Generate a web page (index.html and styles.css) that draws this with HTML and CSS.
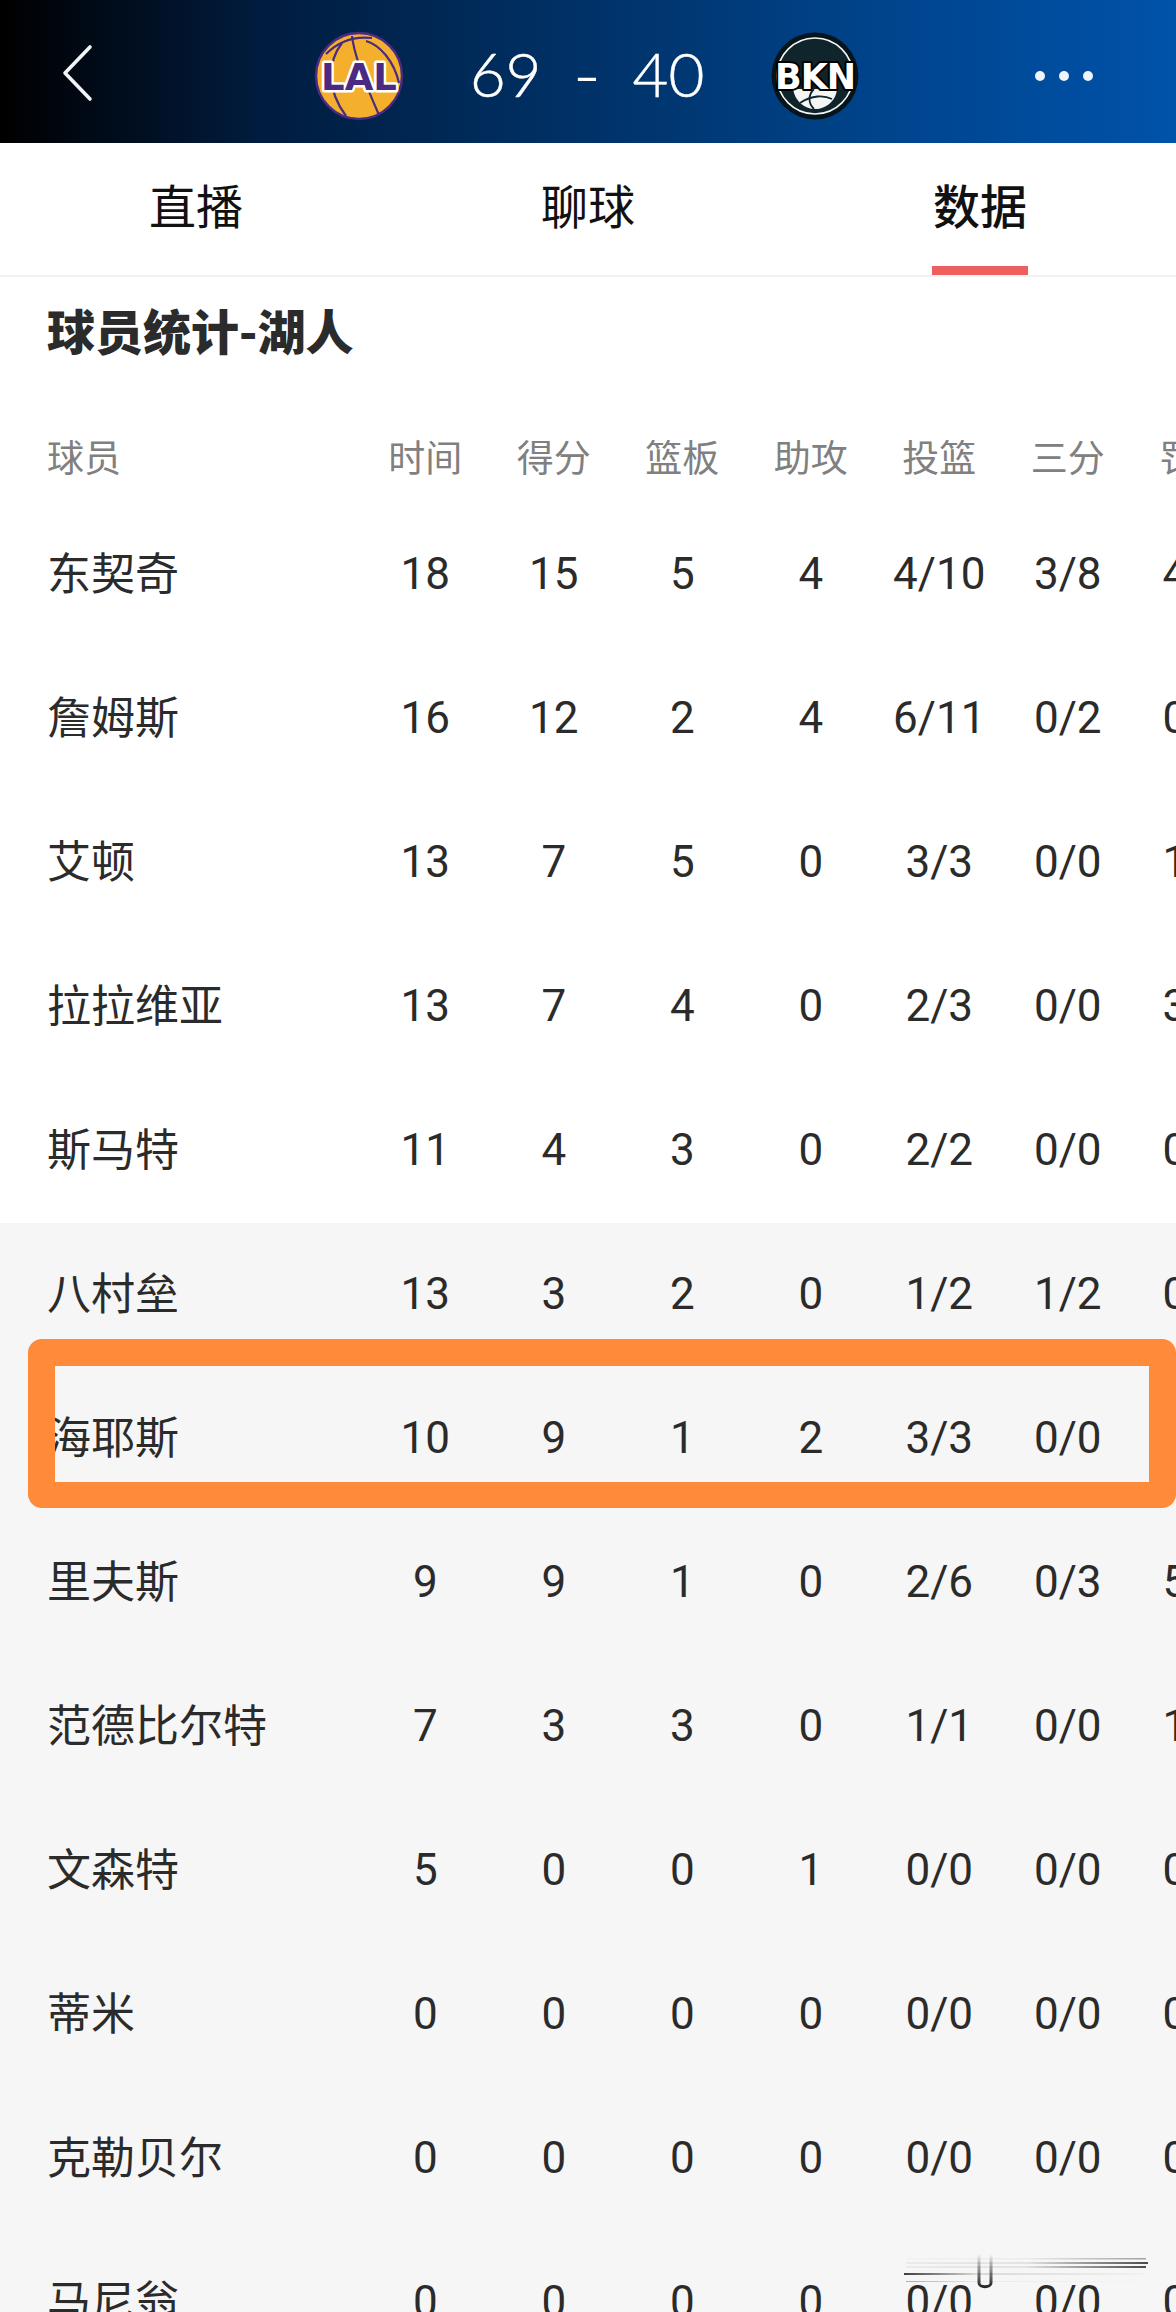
FILE: index.html
```html
<!DOCTYPE html>
<html>

<head>
    <meta charset="utf-8">
    <link rel="stylesheet" href="styles.css">
</head>

<body>
    <div id="page">
        <div id="score-bar">
            <svg class="back" width="34" height="60" viewBox="0 0 34 60">
                <path d="M30 4 L5 30 L30 56" fill="none" stroke="#f2f4f6" stroke-width="3.6" stroke-linecap="round" stroke-linejoin="round"/>
            </svg>
            <div id="score">
                <svg class="logo" width="90" height="90" viewBox="0 0 90 90">
                    <circle cx="45" cy="45" r="43" fill="#f4b02c" stroke="#4a2a82" stroke-width="2.5"/>
                    <g fill="none" stroke="#4a2a82" stroke-width="2.2">
                        <path d="M12 23 C24 11 40 5 58 7"/>
                        <path d="M38 5 C40 24 50 50 65 84"/>
                        <path d="M28 12 C14 30 12 58 32 85"/>
                        <path d="M52 10 C66 14 80 30 85 52"/>
                    </g>
                    <text class="logo-text lal" x="45" y="59" text-anchor="middle">LAL</text>
                </svg>
                <div class="nums"><span>69</span><span class="dash">-</span><span>40</span></div>
                <svg class="logo" width="90" height="90" viewBox="0 0 90 90">
                    <circle cx="45" cy="45" r="43.5" fill="#06141c"/>
                    <circle cx="45" cy="45" r="38" fill="#10242c" stroke="#f4f6f6" stroke-width="1.6"/>
                    <path d="M23 58 L67 58 C66 70 56 78 45 78 C34 78 25 70 23 58 Z" fill="#f4f6f6"/>
                    <g fill="none" stroke="#10242c" stroke-width="1.8">
                        <path d="M44 58 C38 64 38 72 44 78"/>
                        <path d="M30 72 C42 64 54 64 62 68"/>
                    </g>
                    <text class="logo-text bkn" x="45" y="58" text-anchor="middle">BKN</text>
                </svg>
            </div>
            <div class="dots"><i></i><i></i><i></i></div>
        </div>

        <div id="tabs">
            <div class="tab">直播</div>
            <div class="tab">聊球</div>
            <div class="tab active">数据</div>
        </div>

        <div id="title">球员统计-湖人</div>

        <div id="stats">
            <div class="row head">
                <div class="name">球员</div>
                <div class="col">时间</div><div class="col">得分</div><div class="col">篮板</div><div class="col">助攻</div><div class="col">投篮</div><div class="col">三分</div><div class="col">罚球</div>
            </div>

            <div class="row">
                <div class="name">东契奇</div>
                <div class="col">18</div><div class="col">15</div><div class="col">5</div><div class="col">4</div><div class="col">4/10</div><div class="col">3/8</div><div class="col">4/4</div>
            </div>
            <div class="row">
                <div class="name">詹姆斯</div>
                <div class="col">16</div><div class="col">12</div><div class="col">2</div><div class="col">4</div><div class="col">6/11</div><div class="col">0/2</div><div class="col">0/0</div>
            </div>
            <div class="row">
                <div class="name">艾顿</div>
                <div class="col">13</div><div class="col">7</div><div class="col">5</div><div class="col">0</div><div class="col">3/3</div><div class="col">0/0</div><div class="col">1/1</div>
            </div>
            <div class="row">
                <div class="name">拉拉维亚</div>
                <div class="col">13</div><div class="col">7</div><div class="col">4</div><div class="col">0</div><div class="col">2/3</div><div class="col">0/0</div><div class="col">3/4</div>
            </div>
            <div class="row">
                <div class="name">斯马特</div>
                <div class="col">11</div><div class="col">4</div><div class="col">3</div><div class="col">0</div><div class="col">2/2</div><div class="col">0/0</div><div class="col">0/0</div>
            </div>

            <div id="bench">
                <div class="row">
                    <div class="name">八村垒</div>
                    <div class="col">13</div><div class="col">3</div><div class="col">2</div><div class="col">0</div><div class="col">1/2</div><div class="col">1/2</div><div class="col">0/0</div>
                </div>
                <div class="row">
                    <div class="name">海耶斯</div>
                    <div class="col">10</div><div class="col">9</div><div class="col">1</div><div class="col">2</div><div class="col">3/3</div><div class="col">0/0</div><div class="col">3/4</div>
                </div>
                <div class="row">
                    <div class="name">里夫斯</div>
                    <div class="col">9</div><div class="col">9</div><div class="col">1</div><div class="col">0</div><div class="col">2/6</div><div class="col">0/3</div><div class="col">5/6</div>
                </div>
                <div class="row">
                    <div class="name">范德比尔特</div>
                    <div class="col">7</div><div class="col">3</div><div class="col">3</div><div class="col">0</div><div class="col">1/1</div><div class="col">0/0</div><div class="col">1/2</div>
                </div>
                <div class="row">
                    <div class="name">文森特</div>
                    <div class="col">5</div><div class="col">0</div><div class="col">0</div><div class="col">1</div><div class="col">0/0</div><div class="col">0/0</div><div class="col">0/0</div>
                </div>
                <div class="row">
                    <div class="name">蒂米</div>
                    <div class="col">0</div><div class="col">0</div><div class="col">0</div><div class="col">0</div><div class="col">0/0</div><div class="col">0/0</div><div class="col">0/0</div>
                </div>
                <div class="row">
                    <div class="name">克勒贝尔</div>
                    <div class="col">0</div><div class="col">0</div><div class="col">0</div><div class="col">0</div><div class="col">0/0</div><div class="col">0/0</div><div class="col">0/0</div>
                </div>
                <div class="row">
                    <div class="name">马尼翁</div>
                    <div class="col">0</div><div class="col">0</div><div class="col">0</div><div class="col">0</div><div class="col">0/0</div><div class="col">0/0</div><div class="col">0/0</div>
                </div>
            </div>
        </div>

        <div id="highlight"></div>

        <svg id="watermark" width="246" height="36" viewBox="0 0 246 36">
            <defs>
                <linearGradient id="fade-r" x1="0" x2="1" y1="0" y2="0">
                    <stop offset="0" stop-color="#000" stop-opacity="0.05"/>
                    <stop offset="0.5" stop-color="#000" stop-opacity="0.08"/>
                    <stop offset="1" stop-color="#000" stop-opacity="0.7"/>
                </linearGradient>
                <linearGradient id="fade-l" x1="0" x2="1" y1="0" y2="0">
                    <stop offset="0" stop-color="#000" stop-opacity="0.75"/>
                    <stop offset="0.3" stop-color="#000" stop-opacity="0.12"/>
                    <stop offset="1" stop-color="#000" stop-opacity="0.02"/>
                </linearGradient>
                <linearGradient id="fade-u" x1="0" x2="0" y1="0" y2="1">
                    <stop offset="0" stop-color="#000" stop-opacity="0"/>
                    <stop offset="1" stop-color="#000" stop-opacity="0.85"/>
                </linearGradient>
            </defs>
            <rect x="2" y="5" width="240" height="1.5" fill="url(#fade-r)" opacity="0.5"/>
            <rect x="2" y="9" width="242" height="2" fill="url(#fade-r)"/>
            <rect x="2" y="13" width="240" height="2" fill="url(#fade-r)"/>
            <rect x="0" y="20" width="240" height="2" fill="url(#fade-l)"/>
            <rect x="2" y="28" width="240" height="1" fill="url(#fade-l)" opacity="0.4"/>
            <path d="M75 1 V30 C75 35 87 35 87 30 V1" fill="none" stroke="url(#fade-u)" stroke-width="3"/>
        </svg>
    </div>
</body>

</html>
```

FILE: styles.css
```css
html,
body {
    margin: 0;
    padding: 0;
    background: #fff;
}

#page {
    position: relative;
    width: 1176px;
    height: 2312px;
    overflow: hidden;
    font-family: Roboto, "Noto Sans CJK SC", sans-serif;
    color: #2b2b2b;
}

#score-bar {
    height: 143px;
    box-sizing: border-box;
    padding: 2px 83px 0 60px;
    display: flex;
    justify-content: space-between;
    align-items: center;
    background: linear-gradient(90deg, #000 0%, #001c3e 22%, #003268 50%, #00448c 75%, #0052aa 100%);
}

#score {
    display: flex;
    align-items: center;
    gap: 66px;
    margin-left: 45px;
}

.logo {
    display: block;
    margin-top: 6px;
}

.logo-text {
    font-family: "DejaVu Sans", sans-serif;
    font-weight: bold;
    paint-order: stroke;
    stroke-linejoin: round;
}

.lal {
    font-size: 37px;
    fill: #4a2a82;
    stroke: #fff;
    stroke-width: 5px;
}

.bkn {
    font-size: 35px;
    letter-spacing: -1px;
    fill: #fff;
    stroke: #000;
    stroke-width: 4px;
}

.nums {
    display: flex;
    align-items: center;
    gap: 31px;
    font-family: Lato, sans-serif;
    font-weight: 300;
    font-size: 62px;
    color: #fff;
    -webkit-text-stroke: 0.5px #fff;
}

.dash {
    font-size: 78px;
    line-height: 70px;
    -webkit-text-stroke: 0;
}

.dots {
    display: flex;
    gap: 14px;
    margin-top: 6px;
}

.dots i {
    display: block;
    width: 10px;
    height: 10px;
    border-radius: 50%;
    background: #eef4fa;
}

#tabs {
    height: 134px;
    box-sizing: border-box;
    display: flex;
    border-bottom: 2px solid #f1f1f1;
}

.tab {
    flex: 1;
    position: relative;
    box-sizing: border-box;
    padding-top: 30px;
    line-height: 70px;
    text-align: center;
    font-size: 47px;
    color: #111;
}

.tab.active {
    font-weight: 500;
}

.tab.active::after {
    content: "";
    position: absolute;
    left: 148px;
    bottom: 0;
    width: 96px;
    height: 9px;
    background: #ee6060;
}

#title {
    height: 139px;
    box-sizing: border-box;
    padding: 19px 0 0 47px;
    line-height: 66px;
    font-family: "Noto Sans CJK SC", sans-serif;
    font-size: 48px;
    font-weight: 900;
    color: #2b2b2b;
}

.row {
    display: flex;
    align-items: center;
    height: 144px;
    font-size: 44px;
    white-space: nowrap;
}

.row.head {
    height: 84px;
    font-size: 37px;
    color: #808080;
}

.name {
    flex: 0 0 314px;
    padding-left: 47px;
    padding-bottom: 3px;
}

.col {
    flex: 0 0 128.5px;
    text-align: center;
    padding-top: 3px;
}

.head .name,
.head .col {
    padding-top: 0;
    padding-bottom: 4px;
}

#bench {
    background: linear-gradient(#fff 3px, #f6f6f6 3px);
    padding-bottom: 40px;
}

#highlight {
    position: absolute;
    left: 28px;
    top: 1339px;
    width: 1148px;
    height: 169px;
    box-sizing: border-box;
    border: 27px solid #ff8a3a;
    border-bottom-width: 26px;
    border-radius: 14px;
}

#watermark {
    position: absolute;
    left: 904px;
    top: 2253px;
}
```
